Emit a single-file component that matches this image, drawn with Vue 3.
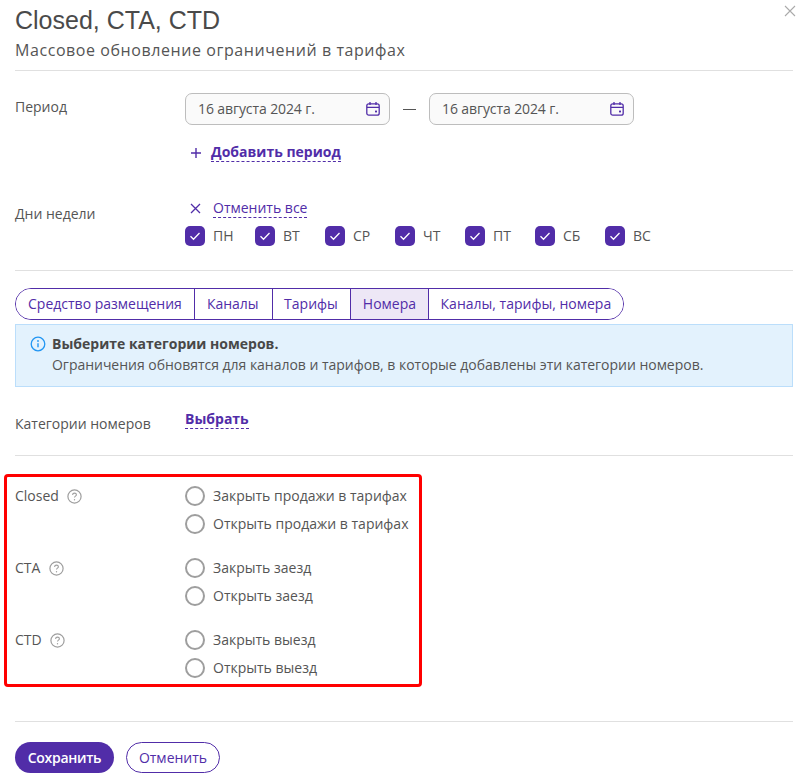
<script setup>
const days = ['ПН', 'ВТ', 'СР', 'ЧТ', 'ПТ', 'СБ', 'ВС']
const tabs = [
  { label: 'Средство размещения' },
  { label: 'Каналы' },
  { label: 'Тарифы' },
  { label: 'Номера', active: true },
  { label: 'Каналы, тарифы, номера' },
]
const groups = [
  { name: 'Closed', options: ['Закрыть продажи в тарифах', 'Открыть продажи в тарифах'] },
  { name: 'CTA', options: ['Закрыть заезд', 'Открыть заезд'] },
  { name: 'CTD', options: ['Закрыть выезд', 'Открыть выезд'] },
]
</script>

<template>
  <div class="page">
    <svg class="close" width="14" height="14" viewBox="0 0 14 14"><path d="M2 2l10 10M12 2L2 12" stroke="#aaa" stroke-width="1.1" fill="none" /></svg>
    <h1 class="title">Closed, CTA, CTD</h1>
    <div class="subtitle">Массовое обновление ограничений в тарифах</div>
    <hr class="rule rule-head" />

    <div class="row row-period">
      <div class="label label-period">Период</div>
      <div class="field">
        <div class="dates">
          <div v-for="n in 2" :key="n" class="date-wrap">
            <span v-if="n === 2" class="dash"></span>
            <div class="date">
              <span>16 августа 2024 г.</span>
              <svg width="16" height="16" viewBox="0 0 16 16" fill="none" stroke="#512da8" stroke-width="1.3">
                <rect x="1.8" y="2.8" width="12.4" height="11.4" rx="2" />
                <path d="M2 6.3h12M5 1v3M11 1v3" />
                <rect x="10" y="9.6" width="2" height="1.8" fill="#512da8" stroke="none" />
              </svg>
            </div>
          </div>
        </div>
        <div class="add">
          <svg width="12" height="12" viewBox="0 0 12 12"><path d="M6 1v10M1 6h10" stroke="#512da8" stroke-width="1.4" fill="none" /></svg>
          <span class="dashed strong">Добавить период</span>
        </div>
      </div>
    </div>

    <div class="row row-days">
      <div class="label label-days">Дни недели</div>
      <div class="field">
        <div class="cancel-all">
          <svg width="11" height="11" viewBox="0 0 11 11"><path d="M1 1l9 9M10 1l-9 9" stroke="#512da8" stroke-width="1.3" fill="none" /></svg>
          <span class="dashed">Отменить все</span>
        </div>
        <div class="days">
          <label v-for="d in days" :key="d" class="day">
            <span class="check">
              <svg width="14" height="14" viewBox="0 0 14 14"><path d="M2.5 7.3l3 3 6-6.3" stroke="#fff" stroke-width="1.3" fill="none" /></svg>
            </span>
            {{ d }}
          </label>
        </div>
      </div>
    </div>
    <hr class="rule rule-days" />

    <div class="tabs">
      <button v-for="t in tabs" :key="t.label" class="tab" :class="{ active: t.active }">{{ t.label }}</button>
    </div>

    <div class="alert">
      <svg class="alert-icon" width="16" height="16" viewBox="0 0 16 16" fill="none">
        <circle cx="8" cy="8" r="6.8" stroke="#2196f3" stroke-width="1.3" />
        <path d="M8 7.2v4" stroke="#2196f3" stroke-width="1.4" />
        <circle cx="8" cy="5" r="0.9" fill="#2196f3" />
      </svg>
      <div>
        <div class="alert-title">Выберите категории номеров.</div>
        <div class="alert-text">Ограничения обновятся для каналов и тарифов, в которые добавлены эти категории номеров.</div>
      </div>
    </div>

    <div class="row row-cat">
      <div class="label label-cat">Категории номеров</div>
      <span class="dashed strong pick">Выбрать</span>
    </div>
    <hr class="rule rule-cat" />

    <div class="groups">
      <div class="marker"></div>
      <div v-for="g in groups" :key="g.name" class="group">
        <div class="group-name">
          {{ g.name }}
          <svg width="15" height="15" viewBox="0 0 15 15" fill="none" stroke="#9e9e9e">
            <circle cx="7.5" cy="7.5" r="6.6" stroke-width="1.2" />
            <path d="M5.6 6c0-1.2.9-1.9 1.9-1.9s1.9.7 1.9 1.7c0 1.3-1.9 1.4-1.9 2.7" stroke-width="1.1" />
            <circle cx="7.5" cy="10.7" r="0.7" fill="#9e9e9e" stroke="none" />
          </svg>
        </div>
        <div class="options">
          <label v-for="o in g.options" :key="o" class="option">
            <span class="radio"></span>
            {{ o }}
          </label>
        </div>
      </div>
    </div>
    <hr class="rule rule-foot" />

    <div class="actions">
      <button class="btn primary">Сохранить</button>
      <button class="btn ghost">Отменить</button>
    </div>
  </div>
</template>

<style scoped>
.page {
  position: relative;
  box-sizing: border-box;
  width: 810px;
  height: 780px;
  overflow: hidden;
  padding: 0 17px 0 15px;
  background: #fff;
  font-family: "Open Sans", sans-serif;
  font-size: 14px;
  line-height: 20px;
  color: #555;
}
.close { position: absolute; top: 4px; right: 13px; }
.title {
  margin: 0;
  padding-top: 6px;
  font-family: "Liberation Sans", sans-serif;
  font-size: 25px;
  font-weight: 400;
  line-height: 28px;
  color: #4a4a4a;
}
.subtitle { margin-top: 5px; font-size: 16px; line-height: 22px; letter-spacing: 0.57px; color: #555; }
.rule { margin: 0; border: 0; border-top: 1px solid #e0e0e0; }
.rule-head { margin-top: 9px; }
.row { display: flex; }
.label { width: 170px; flex: none; }
.row-period { margin-top: 22px; }
.label-period { padding-top: 4px; }
.dates { display: flex; }
.date-wrap { display: flex; align-items: center; }
.dash { width: 13px; height: 1px; margin: 0 13px; background: #555; }
.date {
  box-sizing: border-box;
  display: flex;
  align-items: center;
  justify-content: space-between;
  width: 205px;
  height: 32px;
  padding: 0 8px 0 12px;
  border: 1px solid #bdbdbd;
  border-radius: 7px;
  background: #fafafa;
  letter-spacing: -0.1px;
}
.add { display: flex; align-items: center; gap: 9px; margin-top: 18px; padding-left: 5px; color: #512da8; }
.dashed { border-bottom: 1px dashed #512da8; color: #512da8; line-height: 18px; }
.strong { font-weight: 700; }
.row-days { margin-top: 37px; }
.label-days { padding-top: 5px; }
.cancel-all { display: flex; align-items: center; gap: 12px; padding-left: 5px; color: #512da8; }
.days { display: flex; margin-top: 8px; }
.day { display: flex; align-items: center; gap: 8px; width: 70px; }
.check {
  display: flex;
  align-items: center;
  justify-content: center;
  width: 20px;
  height: 20px;
  border-radius: 5px;
  background: #512da8;
}
.rule-days { margin-top: 24px; }
.tabs {
  display: inline-flex;
  vertical-align: top;
  margin-top: 17px;
  border: 1px solid #512da8;
  border-radius: 16px;
  overflow: hidden;
}
.tab {
  height: 30px;
  padding: 0 12px;
  border: 0;
  border-left: 1px solid #512da8;
  background: #fff;
  color: #512da8;
  font: inherit;
  opacity: 1;
}
.tab:first-child { border-left: 0; }
.tab:nth-child(2) { padding-right: 13px; }
.tab:nth-child(3) { padding-left: 11.5px; padding-right: 12.5px; }
.tab:nth-child(4) { padding-left: 11.5px; padding-right: 11.5px; }
.tab.active { background: #ede7f6; }
.alert {
  box-sizing: border-box;
  display: flex;
  gap: 6px;
  height: 63px;
  margin-top: 4px;
  padding: 9px 14px;
  border: 1px solid #bbdefb;
  background: #e3f2fd;
}
.alert-icon { margin-top: 2px; flex: none; }
.alert-title { font-weight: 700; color: #484848; }
.alert-text { margin-top: 1px; letter-spacing: -0.023px; }
.row-cat { margin-top: 23px; }
.label-cat { padding-top: 4px; }
.pick { align-self: flex-start; }
.rule-cat { margin-top: 21px; }
.groups { position: relative; margin-top: 30px; }
.marker {
  position: absolute;
  top: -12px;
  left: -11px;
  width: 412px;
  height: 207px;
  border: 3px solid #f00;
  border-radius: 4px;
  pointer-events: none;
}
.group { display: flex; margin-bottom: 24px; }
.group:last-of-type { margin-bottom: 0; }
.group-name { display: flex; align-items: flex-start; gap: 8.5px; width: 170px; flex: none; }
.group-name svg { margin-top: 3px; }
.options { display: flex; flex-direction: column; gap: 8px; }
.option { display: flex; align-items: center; gap: 8px; height: 20px; }
.radio {
  box-sizing: border-box;
  width: 20px;
  height: 20px;
  border: 2px solid #9e9e9e;
  border-radius: 50%;
}
.rule-foot { margin-top: 43px; }
.actions { display: flex; gap: 12px; margin-top: 20px; }
.btn {
  height: 31px;
  border-radius: 16px;
  font: inherit;
}
.primary { width: 99px; border: 0; background: #512da8; color: #fff; font-weight: 600; letter-spacing: -0.3px; }
.ghost { width: 94px; border: 1px solid #512da8; background: #fff; color: #512da8; }
</style>
